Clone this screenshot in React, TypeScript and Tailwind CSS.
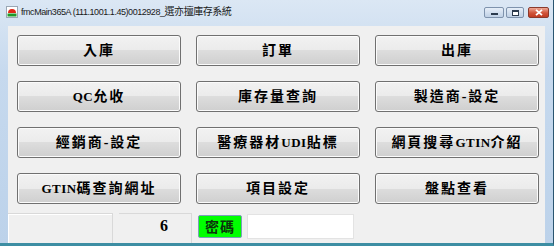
import React from 'react';

const rows: string[][] = [
  ['入庫', '訂單', '出庫'],
  ['QC允收', '庫存量查詢', '製造商-設定'],
  ['經銷商-設定', '醫療器材UDI貼標', '網頁搜尋GTIN介紹'],
  ['GTIN碼查詢網址', '項目設定', '盤點查看'],
];

// split Latin runs so they can be set narrower than the CJK glyphs
const Label = ({ text }: { text: string }) => {
  const parts = text.split(/([A-Za-z0-9]+)/).filter(Boolean);
  return (
    <>
      {parts.map((p, i) =>
        /^[A-Za-z0-9]+$/.test(p) ? (
          <span key={i} className="text-[13px] tracking-[0.5px]">
            {p}
          </span>
        ) : (
          <span key={i}>{p}</span>
        )
      )}
    </>
  );
};

const AppIcon = () => (
  <svg width="12" height="12" viewBox="0 0 12 12" className="shrink-0">
    <rect x="0.5" y="0.5" width="11" height="11" fill="#ffffff" stroke="#9aa7b4" />
    <path d="M2 7 A4 4 0 0 1 10 7 Z" fill="#e02818" />
    <rect x="1.5" y="7.5" width="9" height="3" fill="#1e9a2a" />
  </svg>
);

const CaptionButtons = () => (
  <div className="flex items-start gap-[2px] pt-[7px]">
    <div className="flex h-[11px] w-[20px] items-end justify-center rounded-[2px] border border-[#7f93ad] bg-[linear-gradient(to_bottom,#e6eef8,#bfd0e5)] pb-[2px]">
      <div className="h-[2px] w-[7px] border border-[#2b3a4d] bg-white" />
    </div>
    <div className="flex h-[11px] w-[18px] items-center justify-center rounded-[2px] border border-[#7f93ad] bg-[linear-gradient(to_bottom,#e6eef8,#bfd0e5)]">
      <div className="h-[6px] w-[7px] border border-[#2b3a4d] border-t-2 bg-white" />
    </div>
    <div className="ml-[2px] flex h-[11px] w-[21px] items-center justify-center rounded-[2px] border border-[#8a3a2c] bg-[linear-gradient(to_bottom,#eea794,#d0543a_55%,#c23c22)]">
      <svg width="8" height="7" viewBox="0 0 8 7">
        <path d="M1 0.8 L7 6.2 M7 0.8 L1 6.2" stroke="#ffffff" strokeWidth="1.8" />
      </svg>
    </div>
  </div>
);

export default function App() {
  return (
    <div className="flex h-[246px] w-[554px] flex-col overflow-hidden border-r border-b-[3px] border-r-[#2a5570] border-b-[#3d8ea3] bg-[linear-gradient(to_bottom,#dbe7f4,#c6d9ee_30%,#bcd2ea)] font-['Liberation_Sans','Noto_Sans_CJK_TC',sans-serif]">
      {/* title bar */}
      <div className="flex h-[26px] shrink-0 items-start justify-between pl-[6px] pr-[4px]">
        <div className="flex items-center gap-[3px] pt-[6px]">
          <AppIcon />
          <span className="text-[9px] leading-[12px] tracking-[-0.45px] text-[#1a1a1a]">
            fmcMain365A (111.1001.1.45)0012928_
            <span className="text-[10px]">選亦擅庫存系統</span>
          </span>
        </div>
        <CaptionButtons />
      </div>

      {/* client area */}
      <div className="mx-[8px] flex flex-1 flex-col bg-[#f0f0f0] pl-[9px] pt-[9px]">
        <div className="grid w-[522px] grid-cols-3 gap-x-[15px] gap-y-[15px]">
          {rows.flat().map((label) => (
            <button
              key={label}
              className="flex h-[31px] items-center justify-center rounded-[3px] border border-[#707070] bg-[linear-gradient(to_bottom,#f2f2f2_0%,#ebebeb_50%,#dddddd_50%,#cfcfcf_100%)] text-[14px] font-bold tracking-[2px] text-black shadow-[inset_0_0_0_1px_#fbfbfb] font-['Liberation_Serif','Noto_Sans_CJK_TC',serif]"
            >
              <Label text={label} />
            </button>
          ))}
        </div>

        {/* status bar */}
        <div className="-ml-[9px] mt-[9px] flex h-[30px] items-stretch">
          <div className="w-[105px] border-t border-r border-[#d9d9d9] shadow-[inset_1px_1px_0_#ffffff]" />
          <div className="ml-[6px] flex w-[73px] items-start justify-start border-t border-r border-[#d9d9d9] pl-[41px] pt-[3px] font-['Liberation_Serif',serif] text-[16px] font-bold leading-[18px] text-black">
            6
          </div>
          <div className="ml-[6px] mt-[2px] flex h-[23px] w-[44px] items-center justify-center rounded-[2px] border border-[#7aa0b8] bg-[#00ff00] text-[14px] font-bold tracking-[1px] text-[#0c330c] font-['Noto_Sans_CJK_TC',sans-serif]">
            密碼
          </div>
          <div className="ml-[5px] mt-[1px] h-[25px] w-[107px] border border-[#e3e3e3] bg-white" />
        </div>
      </div>
    </div>
  );
}
